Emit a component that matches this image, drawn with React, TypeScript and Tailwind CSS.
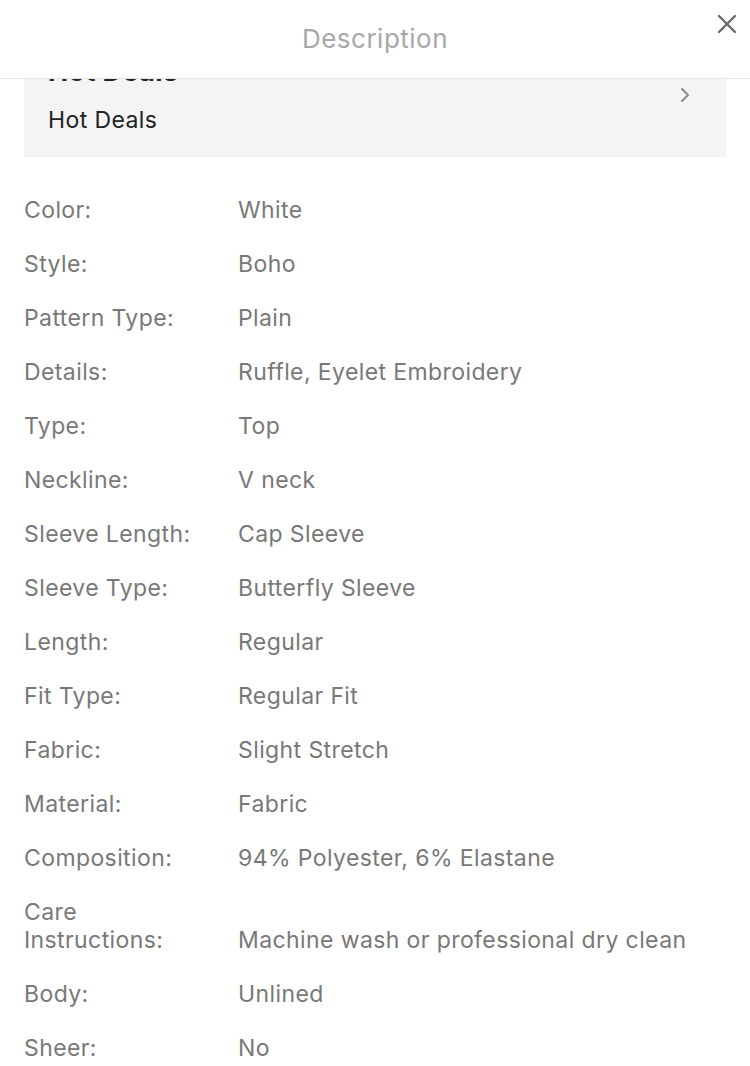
import React from "react";

const rows: [string, string][] = [
  ["Color:", "White"],
  ["Style:", "Boho"],
  ["Pattern Type:", "Plain"],
  ["Details:", "Ruffle, Eyelet Embroidery"],
  ["Type:", "Top"],
  ["Neckline:", "V neck"],
  ["Sleeve Length:", "Cap Sleeve"],
  ["Sleeve Type:", "Butterfly Sleeve"],
  ["Length:", "Regular"],
  ["Fit Type:", "Regular Fit"],
  ["Fabric:", "Slight Stretch"],
  ["Material:", "Fabric"],
  ["Composition:", "94% Polyester, 6% Elastane"],
  ["Care Instructions:", "Machine wash or professional dry clean"],
  ["Body:", "Unlined"],
  ["Sheer:", "No"],
];

export default function App() {
  return (
    <div
      className="w-[750px] h-[1066px] bg-white overflow-hidden"
      style={{ fontFamily: "Inter, 'Liberation Sans', sans-serif" }}
    >
      <div className="relative h-[79px] border-b border-[#e6e6e6] flex items-center justify-center">
        <span className="text-[26px] tracking-[0.5px] text-[#a8a8a8] leading-none">Description</span>
        <svg
          className="absolute right-[13px] top-[14px]"
          width="20"
          height="20"
          viewBox="0 0 20 20"
          fill="none"
          stroke="#6b6b6b"
          strokeWidth="2.4"
          strokeLinecap="round"
        >
          <path d="M2 2L18 18M18 2L2 18" />
        </svg>
      </div>
      <div className="mx-[24px] h-[78px] bg-[#f4f4f4] overflow-hidden relative">
        <div className="mt-[-22px] pl-[24px] text-[27px] tracking-[0.4px] leading-[30px] font-bold text-[#222]">Hot Deals</div>
        <div className="mt-[19px] pl-[24px] text-[23px] tracking-[0.4px] leading-[28px] text-[#222]">Hot Deals</div>
        <svg
          className="absolute left-[656px] top-[8px]"
          width="10"
          height="16"
          viewBox="0 0 10 16"
          fill="none"
          stroke="#8a8a8a"
          strokeWidth="2"
          strokeLinecap="round"
          strokeLinejoin="round"
        >
          <path d="M2 2L8 8L2 14" />
        </svg>
      </div>
      <div className="mt-[39px] px-[24px] flex flex-col gap-[26px]">
        {rows.map(([k, v]) => (
          <div key={k} className="flex items-end text-[23px] tracking-[0.4px] leading-[28px] text-[#787878]">
            <div className="w-[214px] shrink-0">
              {k === "Care Instructions:" ? (
                <>
                  Care
                  <br />
                  Instructions:
                </>
              ) : (
                k
              )}
            </div>
            <div>{v}</div>
          </div>
        ))}
      </div>
    </div>
  );
}
